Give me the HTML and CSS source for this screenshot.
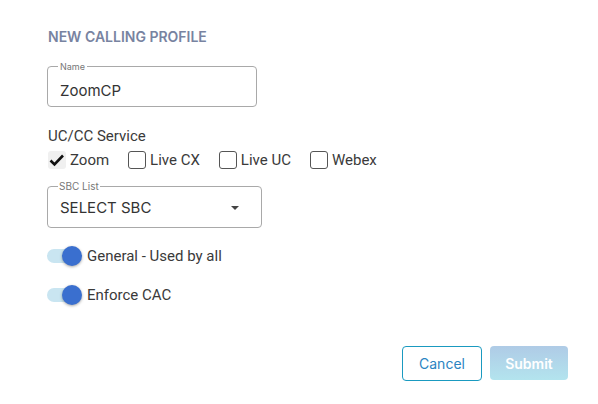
FILE: index.html
```html
<!DOCTYPE html>
<html lang="en">
<head>
    <meta charset="UTF-8">
    <meta name="viewport" content="width=device-width, initial-scale=1.0">
    <title>New Calling Profile</title>
    <link rel="stylesheet" href="styles.css">
</head>
<body>
    <div class="panel">
        <h2 class="title">NEW CALLING PROFILE</h2>

        <fieldset class="field name-field">
            <legend>Name</legend>
            <span class="value">ZoomCP</span>
        </fieldset>

        <div class="service">
            <div class="service-label">UC/CC Service</div>
            <div class="checks">
                <label class="check"><span class="box checked">
                    <svg width="16" height="14" viewBox="0 0 16 14"><path d="M1.5 7.5 L5.5 11.5 L14 2.5" fill="none" stroke="#111" stroke-width="2.6"/></svg>
                </span>Zoom</label>
                <label class="check"><span class="box"></span>Live CX</label>
                <label class="check"><span class="box"></span>Live UC</label>
                <label class="check"><span class="box"></span>Webex</label>
            </div>
        </div>

        <fieldset class="field sbc-field">
            <legend>SBC List</legend>
            <span class="value select">SELECT SBC</span>
            <span class="caret"></span>
        </fieldset>

        <div class="toggle-row">
            <span class="toggle"><span class="knob"></span></span>
            <span>General - Used by all</span>
        </div>
        <div class="toggle-row">
            <span class="toggle"><span class="knob"></span></span>
            <span>Enforce CAC</span>
        </div>

        <div class="actions">
            <button class="btn cancel">Cancel</button>
            <button class="btn submit">Submit</button>
        </div>
    </div>
</body>
</html>
```

FILE: styles.css
```css
* {
    margin: 0;
    padding: 0;
    box-sizing: border-box;
}

body {
    font-family: Roboto, "Noto Sans", sans-serif;
    background-color: #fff;
    color: #3a3a3a;
}

.panel {
    width: 598px;
    height: 404px;
    padding: 29px 30px 0 47px;
}

.title {
    font-family: Inter, sans-serif;
    font-size: 14px;
    font-weight: 600;
    color: #7883a1;
    margin-left: 1px;
    line-height: 16px;
}

.field {
    border: 1px solid #a9a9a9;
    border-radius: 4px;
    padding: 0 12px;
    position: relative;
}

.field legend {
    font-family: Inter, sans-serif;
    font-size: 9px;
    color: #777;
    padding: 0 2px;
    margin-left: -2px;
    line-height: 9px;
}

.name-field {
    width: 210px;
    height: 45px;
    margin-top: 17px;
}

.value {
    display: block;
    font-family: Inter, sans-serif;
    font-size: 15px;
    color: #333;
    line-height: 20px;
}

.name-field .value {
    margin-top: 10px;
}

.service {
    margin-top: 20px;
}

.service-label {
    font-size: 15px;
    line-height: 18px;
    margin-left: 1px;
}

.checks {
    display: flex;
    gap: 19px;
    margin-top: 6px;
}

.check {
    display: flex;
    align-items: center;
    gap: 4px;
    font-size: 15px;
    line-height: 18px;
}

.box {
    width: 18px;
    height: 18px;
    border: 1px solid #555;
    border-radius: 3px;
    display: flex;
    align-items: center;
    justify-content: center;
}

.box.checked {
    border: none;
    background-color: #f0f0f0;
    margin-left: 1px;
}

.sbc-field {
    width: 215px;
    height: 47px;
    margin-top: 12px;
}

.sbc-field legend {
    font-size: 10px;
    line-height: 10px;
    padding: 0 1px;
}

.sbc-field .value {
    margin-top: 7px;
    font-size: 15px;
}

.caret {
    position: absolute;
    right: 22px;
    top: 15px;
    border-left: 4px solid transparent;
    border-right: 4px solid transparent;
    border-top: 4px solid #444;
}

.toggle-row {
    display: flex;
    align-items: center;
    gap: 6px;
    font-size: 15px;
    margin-top: 18px;
    height: 20px;
}

.toggle-row + .toggle-row {
    margin-top: 19px;
}

.toggle {
    width: 34px;
    height: 14px;
    border-radius: 7px;
    background-color: #c9e5f1;
    position: relative;
}

.knob {
    position: absolute;
    right: -1px;
    top: -3px;
    width: 20px;
    height: 20px;
    border-radius: 50%;
    background-color: #3a6fcf;
    box-shadow: 0 1px 3px rgba(0, 0, 0, 0.35);
}

.actions {
    display: flex;
    justify-content: flex-end;
    align-items: flex-start;
    gap: 8px;
    margin-top: 41px;
}

.btn {
    font-family: Inter, sans-serif;
    font-size: 14px;
    border-radius: 4px;
    height: 35px;
    cursor: pointer;
}

.cancel {
    width: 80px;
    background-color: #fff;
    border: 1px solid #1a9ac0;
    color: #2b84c2;
}

.submit {
    width: 78px;
    height: 34px;
    border: none;
    color: #fff;
    font-weight: 600;
    background: linear-gradient(#afcbe6, #b3e4ee);
}
```
